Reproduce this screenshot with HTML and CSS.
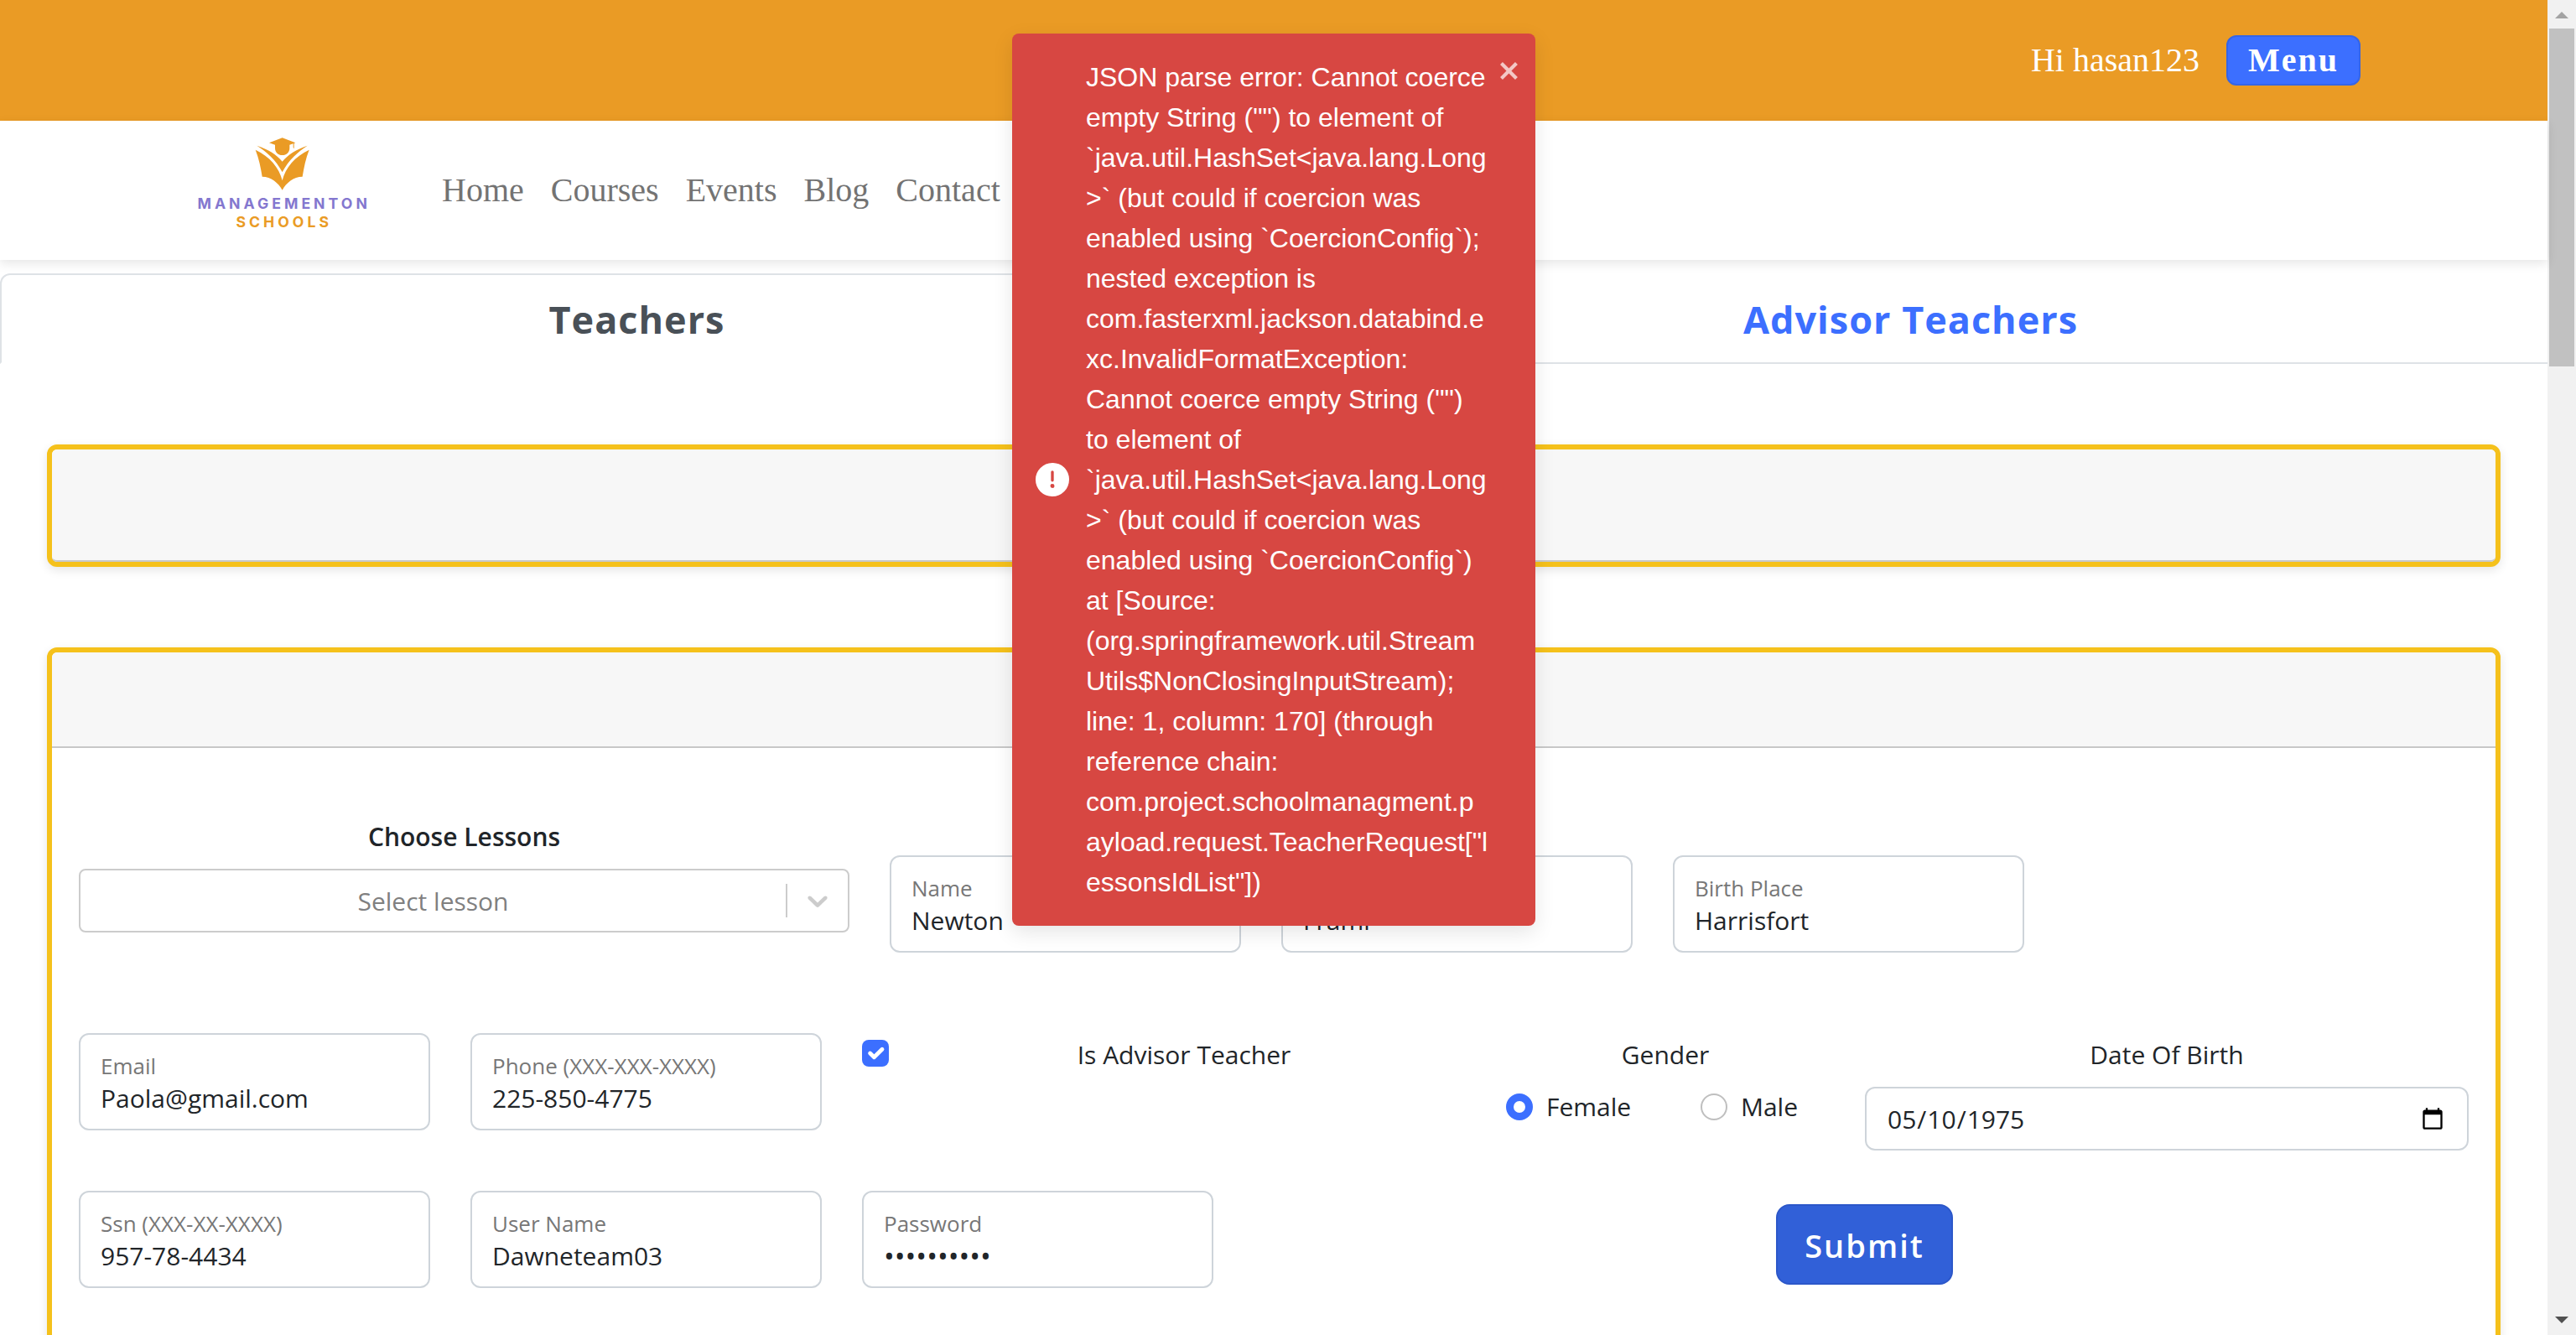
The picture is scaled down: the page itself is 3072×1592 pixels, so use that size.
FILE: index.html
```html
<!DOCTYPE html>
<html lang="en">
<head>
<meta charset="utf-8">
<title>Managementon Schools - Teachers</title>
<link rel="stylesheet" href="styles.css">
</head>
<body>
<div class="viewport">
  <div class="page">
    <header class="topbar">
      <div class="container topbar-inner">
        <span class="greeting">Hi hasan123</span>
        <button class="btn btn-menu" type="button">Menu</button>
      </div>
    </header>
    <nav class="navbar">
      <div class="container navbar-inner">
        <a class="brand" href="#" aria-label="Managementon Schools">
          <svg class="brand-logo" viewBox="9 36 690 390">
            <g fill="#ea9b25">
              <path d="M303 61 350 43 397 61 392 63V82L389 78V64L376 68V80C376 94 365 105 350 105S324 94 324 80V68Z"/>
              <path d="M259 71C300 84 330 103 350 128C370 103 400 84 440 71C408 92 372 122 350 166C328 122 292 92 259 71Z"/>
              <path d="M254 86C305 110 339 150 350 196C361 150 395 110 446 86C434 116 427 150 422 182C390 182 364 204 350 230C336 204 310 182 278 182C273 150 266 116 254 86Z"/>
            </g>
            <text class="logo-text logo-name" x="356" y="298">MANAGEMENTON</text>
            <text class="logo-text logo-kind" x="356" y="363">SCHOOLS</text>
          </svg>
        </a>
        <a class="nav-link" href="#">Home</a>
        <a class="nav-link" href="#">Courses</a>
        <a class="nav-link" href="#">Events</a>
        <a class="nav-link" href="#">Blog</a>
        <a class="nav-link" href="#">Contact</a>
      </div>
    </nav>
    <main>
      <div class="tabs" role="tablist">
        <button class="tab tab-active" type="button" role="tab" aria-selected="true">Teachers</button>
        <button class="tab" type="button" role="tab" aria-selected="false">Advisor Teachers</button>
      </div>
      <div class="cards">
        <section class="card">
          <div class="card-header card-header-tall"></div>
        </section>
        <section class="card">
          <div class="card-header"></div>
          <form class="card-body">
            <div class="row row-lesson">
              <div class="lesson">
                <label class="lesson-label" for="lesson">Choose Lessons</label>
                <div class="select-box">
                  <select class="select" id="lesson"><option>Select lesson</option></select>
                  <span class="select-arrow">
                    <svg viewBox="0 0 20 20" width="40" height="40"><path fill="#ccc" d="M4.516 7.548c0.436-0.446 1.043-0.481 1.576 0l3.908 3.747 3.908-3.747c0.533-0.481 1.141-0.446 1.574 0 0.436 0.445 0.408 1.197 0 1.615-0.406 0.418-4.695 4.502-4.695 4.502-0.217 0.223-0.502 0.335-0.787 0.335s-0.57-0.112-0.789-0.335c0 0-4.287-4.084-4.695-4.502s-0.436-1.17 0-1.615z"/></svg>
                  </span>
                </div>
              </div>
              <div class="field"><label for="name">Name</label><input id="name" type="text" value="Newton"></div>
              <div class="field"><label for="surname">Surname</label><input id="surname" type="text" value="Frami"></div>
              <div class="field"><label for="birthplace">Birth Place</label><input id="birthplace" type="text" value="Harrisfort"></div>
            </div>
            <div class="row row-contact">
              <div class="field"><label for="email">Email</label><input id="email" type="text" value="Paola@gmail.com"></div>
              <div class="field"><label for="phone">Phone (XXX-XXX-XXXX)</label><input id="phone" type="text" value="225-850-4775"></div>
              <div class="advisor">
                <input class="check" id="advisor" type="checkbox" checked>
                <label class="advisor-label" for="advisor">Is Advisor Teacher</label>
              </div>
              <fieldset class="gender">
                <legend>Gender</legend>
                <div class="gender-options">
                  <label class="option"><input class="radio" type="radio" name="gender" checked>Female</label>
                  <label class="option"><input class="radio" type="radio" name="gender">Male</label>
                </div>
              </fieldset>
              <div class="birth">
                <label class="birth-label" for="birth">Date Of Birth</label>
                <input class="date" id="birth" type="date" value="1975-05-10">
              </div>
            </div>
            <div class="row row-account">
              <div class="field"><label for="ssn">Ssn (XXX-XX-XXXX)</label><input id="ssn" type="text" value="957-78-4434"></div>
              <div class="field"><label for="user">User Name</label><input id="user" type="text" value="Dawneteam03"></div>
              <div class="field"><label for="password">Password</label><input class="password" id="password" type="password" value="secret1234"></div>
              <div class="actions"><button class="btn btn-submit" type="button">Submit</button></div>
            </div>
          </form>
        </section>
      </div>
    </main>
  </div>
  <div class="scrollbar" aria-hidden="true">
    <svg class="scroll-arrow" viewBox="0 0 34 34"><path fill="#a3a3a3" d="M17 14 25 22H9Z"/></svg>
    <div class="scroll-thumb"></div>
    <svg class="scroll-arrow scroll-down" viewBox="0 0 34 34"><path fill="#505050" d="M9 12H25L17 20Z"/></svg>
  </div>
</div>
<div class="toast" role="alert">
  <svg class="toast-icon" viewBox="0 0 24 24"><path fill="#fff" d="M11.983 0a12.206 12.206 0 00-8.51 3.653A11.8 11.8 0 000 12.207 11.779 11.779 0 0011.8 24h.214A12.111 12.111 0 0024 11.791 11.766 11.766 0 0011.983 0zM10.5 16.542a1.476 1.476 0 011.449-1.53h.027a1.527 1.527 0 011.523 1.47 1.475 1.475 0 01-1.449 1.53h-.027a1.529 1.529 0 01-1.523-1.47zM11 12.5v-6a1 1 0 012 0v6a1 1 0 11-2 0z"/></svg>
  <p class="toast-text">JSON parse error: Cannot coerce empty String ("") to element of `java.util.HashSet&lt;java.lang.Long&gt;` (but could if coercion was enabled using `CoercionConfig`); nested exception is com.fasterxml.jackson.databind.exc.InvalidFormatException: Cannot coerce empty String ("") to element of `java.util.HashSet&lt;java.lang.Long&gt;` (but could if coercion was enabled using `CoercionConfig`) at [Source: (org.springframework.util.StreamUtils$NonClosingInputStream); line: 1, column: 170] (through reference chain: com.project.schoolmanagment.payload.request.TeacherRequest["lessonsIdList"])</p>
  <button class="toast-close" type="button" aria-label="Close">
    <svg viewBox="0 0 14 16" width="28" height="32"><path fill="#fff" fill-rule="evenodd" d="M7.71 8.23l3.75 3.75-1.48 1.48-3.75-3.75-3.75 3.75L1 11.98l3.75-3.75L1 4.48 2.48 3l3.75 3.75L9.98 3l1.48 1.48-3.75 3.75z"/></svg>
  </button>
</div>
</body>
</html>
```
FILE: styles.css
```css
* { box-sizing: border-box; }

body {
  margin: 0;
  background: #fff;
  color: #212529;
  font-family: "Open Sans", "Noto Sans", sans-serif;
  font-size: 30px;
  line-height: 48px;
}

button, input, select { font: inherit; color: inherit; }
a { text-decoration: none; }

.viewport { display: flex; height: 100vh; overflow: hidden; }
.page { flex: 1; min-width: 0; }
.container { max-width: 2592px; margin: 0 auto; }

.topbar {
  background: #ea9b25;
  color: #fff;
  font: 40px/60px "Liberation Serif", serif;
}
.topbar-inner {
  display: flex;
  align-items: center;
  justify-content: flex-end;
  gap: 32px;
  height: 144px;
}
.btn {
  border: 2px solid #3565e6;
  border-radius: 12px;
  background: #3c6fff;
  color: #fff;
  font-weight: 700;
  letter-spacing: 2px;
}
.btn-menu { padding: 0 24px; height: 60px; line-height: 56px; }

.navbar {
  position: relative;
  background: #fff;
  box-shadow: 0 4px 12px rgba(0, 0, 0, .1);
  font: 40px/60px "Liberation Serif", serif;
}
.navbar-inner { display: flex; align-items: center; height: 166px; }
.brand { margin-right: 58px; }
.brand-logo { display: block; width: 230px; height: 130px; }
.logo-text { font: 700 53px Inter, sans-serif; text-anchor: middle; letter-spacing: 12px; }
.logo-name { fill: #8477cf; }
.logo-kind { fill: #ea9b25; }
.nav-link { padding: 0 16px; color: #737373; }

.tabs {
  display: grid;
  grid-template-columns: 1fr 1fr;
  margin-top: 16px;
  box-shadow: inset 0 -2px #dee2e6;
}
.tab {
  height: 108px;
  padding: 2px 0 0;
  border: 2px solid transparent;
  background: none;
  color: #3c6fff;
  font-size: 45px;
  font-weight: 700;
  line-height: 72px;
  letter-spacing: 1px;
}
.tab-active {
  border-color: #dee2e6 #dee2e6 #fff;
  border-radius: 12px 12px 0 0;
  background: #fff;
  color: #495057;
}

.cards { display: grid; gap: 96px; padding: 96px 56px; }
.card {
  border: 6px solid #f5c11b;
  border-radius: 12px;
  background: #fff;
  box-shadow: 0 4px 12px rgba(0, 0, 0, .1);
}
.card-header {
  height: 114px;
  border-bottom: 2px solid #c8c8c8;
  border-radius: 6px 6px 0 0;
  background: #f7f7f7;
}
.card-header-tall { height: 134px; border-radius: 6px; }
.card-body { padding: 80px 32px 160px; }

.row { display: grid; column-gap: 48px; align-items: start; }
.row-lesson { grid-template-columns: 919fr 419fr 419fr 419fr 482fr; align-items: end; }
.row-contact { grid-template-columns: 419fr 419fr 720fr 380fr 720fr; margin-top: 96px; }
.row-account { grid-template-columns: 419fr 419fr 419fr 1449fr; margin-top: 48px; }

.lesson { padding-bottom: 24px; }
.lesson-label { display: block; padding: 2px 0 14px; text-align: center; font-weight: 600; }
.select-box {
  display: flex;
  align-items: center;
  height: 76px;
  border: 2px solid #ccc;
  border-radius: 8px;
}
.select {
  flex: 1;
  height: 72px;
  padding: 2px 0 0;
  border: 0;
  background: none;
  appearance: none;
  color: #808080;
  text-align: center;
  text-align-last: center;
}
.select-arrow {
  display: grid;
  place-items: center;
  width: 74px;
  height: 40px;
  border-left: 2px solid #ccc;
}

.field {
  display: flex;
  flex-direction: column;
  height: 116px;
  padding: 18px 24px;
  border: 2px solid #ced4da;
  border-radius: 12px;
  background: #fff;
}
.field label { color: #777; font-size: 26px; line-height: 38px; }
.field input {
  width: 100%;
  height: 40px;
  padding: 0;
  border: 0;
  background: none;
  line-height: 40px;
}
.field .password { font-size: 34px; }

.advisor { display: flex; gap: 16px; }
.advisor-label { flex: 1; padding-top: 2px; text-align: center; }
.check {
  flex: none;
  width: 32px;
  height: 32px;
  margin: 8px 0;
  appearance: none;
  border-radius: 8px;
  background: #3c6fff url("data:image/svg+xml,%3Csvg xmlns='http://www.w3.org/2000/svg' viewBox='0 0 20 20'%3E%3Cpath fill='none' stroke='%23fff' stroke-linecap='round' stroke-linejoin='round' stroke-width='3' d='m6 10 3 3 6-6'/%3E%3C/svg%3E") center / contain no-repeat;
}

.gender { min-width: 0; margin: 0; padding: 0; border: 0; text-align: center; }
.gender legend { width: 100%; padding: 2px 0 0; }
.gender-options { display: flex; justify-content: space-between; padding: 14px 32px 0 0; }
.option { display: flex; align-items: center; gap: 16px; }
.radio {
  width: 32px;
  height: 32px;
  margin: 0;
  appearance: none;
  border: 2px solid #bfbfbf;
  border-radius: 50%;
}
.radio:checked { border: 9px solid #3c6fff; }

.birth { text-align: center; }
.birth-label { display: block; padding: 2px 0 14px; }
.date {
  display: block;
  width: 100%;
  height: 76px;
  padding: 2px 24px 0;
  border: 2px solid #ced4da;
  border-radius: 12px;
  background: #fff;
}

.actions { display: grid; justify-content: center; padding: 16px 0 0 8px; }
.btn-submit {
  height: 96px;
  padding: 2px 32px 0;
  border-color: #2c57c9;
  border-radius: 16px;
  background: #3160d8;
  font-size: 38px;
  font-weight: 600;
}

.scrollbar {
  display: flex;
  flex-direction: column;
  align-items: center;
  flex: none;
  width: 34px;
  background: #f1f1f1;
}
.scroll-arrow { width: 34px; height: 34px; }
.scroll-thumb { width: 30px; height: 403px; background: #c1c1c1; }
.scroll-down { margin-top: auto; }

/* The alert floats over the page, centred at the top */
.toast {
  position: absolute;
  top: 40px;
  left: 50%;
  display: flex;
  align-items: center;
  width: 624px;
  margin-left: -329px;
  padding: 28px 16px 28px 28px;
  border-radius: 8px;
  background: #d74742;
  color: #fff;
  font: 32px/48px "Liberation Sans", sans-serif;
  box-shadow: 0 8px 24px rgba(0, 0, 0, .1);
}
.toast-icon { flex: none; width: 40px; height: 40px; margin-right: 20px; }
.toast-text { flex: 1; min-width: 0; margin: 0; overflow-wrap: anywhere; }
.toast-close {
  align-self: flex-start;
  margin-left: 12px;
  padding: 0;
  border: 0;
  background: none;
  opacity: .7;
}
.toast-close svg { display: block; }
```
